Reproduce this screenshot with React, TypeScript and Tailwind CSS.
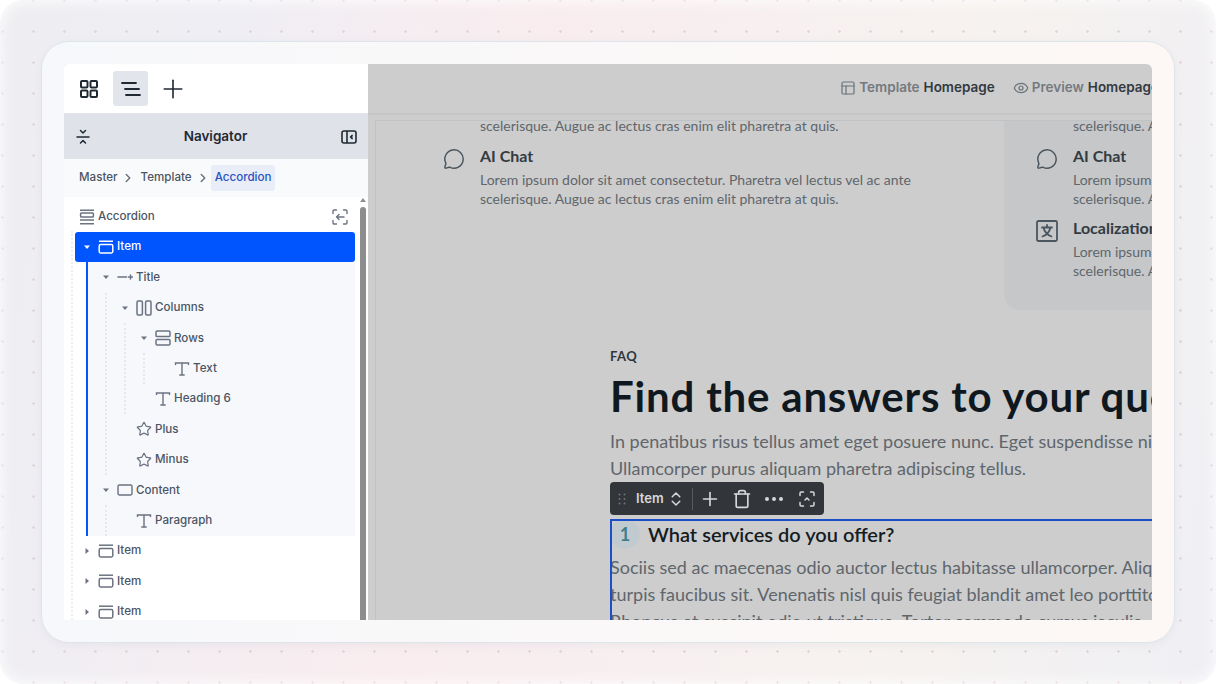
import { ChevronRight, ChevronsUpDown, Ellipsis, Eye, MessageCircle, PanelsTopLeft, Plus, Star, Trash } from 'lucide-react';
import type { ReactNode } from 'react';

type IconProps = { className?: string };

function GridIcon({ className }: IconProps) {
  return (
    <svg viewBox="0 0 18 18" className={className} fill="none" stroke="currentColor" strokeWidth="2">
      <rect x="1" y="1" width="6.5" height="6.5" rx="1" />
      <rect x="10.5" y="1" width="6.5" height="6.5" rx="1" />
      <rect x="1" y="10.5" width="6.5" height="6.5" rx="1" />
      <rect x="10.5" y="10.5" width="6.5" height="6.5" rx="1" />
    </svg>
  );
}

function MenuIcon({ className }: IconProps) {
  return (
    <svg viewBox="0 0 20 16" className={className} fill="none" stroke="currentColor" strokeWidth="1.8" strokeLinecap="round">
      <path d="M1 2h14M4 8h14M5 14h14" />
    </svg>
  );
}

function CollapseIcon({ className }: IconProps) {
  return (
    <svg viewBox="0 0 14 16" className={className} fill="none" stroke="currentColor" strokeWidth="1.5" strokeLinecap="round" strokeLinejoin="round">
      <path d="M1 8h12M4.5 1.5 7 4l2.5-2.5M4.5 14 7 11.5 9.5 14" />
    </svg>
  );
}

function SidebarIcon({ className }: IconProps) {
  return (
    <svg viewBox="0 0 16 14" className={className} fill="none" stroke="currentColor" strokeWidth="1.6" strokeLinejoin="round">
      <rect x="1" y="1" width="14" height="12" rx="2" />
      <path d="M6 1v12" />
      <path d="M11.5 4.8 9.4 7l2.1 2.2" fill="currentColor" strokeWidth="1.2" />
    </svg>
  );
}

function StackIcon({ className }: IconProps) {
  return (
    <svg viewBox="0 0 16 16" className={className} fill="none" stroke="currentColor" strokeWidth="1.5">
      <path d="M1 1.2h14M1 14.8h14" />
      <rect x="1.6" y="4" width="12.8" height="4" rx=".8" />
      <path d="M1 11h14" />
    </svg>
  );
}

function ItemIcon({ className }: IconProps) {
  return (
    <svg viewBox="0 0 16 14" className={className} fill="none" stroke="currentColor" strokeWidth="1.5">
      <path d="M1 1.2h14" />
      <rect x="1.2" y="4.6" width="13.6" height="8.4" rx="1.4" />
    </svg>
  );
}

function TitleIcon({ className }: IconProps) {
  return (
    <svg viewBox="0 0 16 8" className={className} fill="none" stroke="currentColor" strokeWidth="1.5" strokeLinecap="round">
      <path d="M1 4h8.5M13.5 2v4M11.5 4h4" />
    </svg>
  );
}

function ColumnsIcon({ className }: IconProps) {
  return (
    <svg viewBox="0 0 16 16" className={className} fill="none" stroke="currentColor" strokeWidth="1.5">
      <rect x="1" y="1" width="5.4" height="14" rx="1.2" />
      <rect x="9.6" y="1" width="5.4" height="14" rx="1.2" />
    </svg>
  );
}

function RowsIcon({ className }: IconProps) {
  return (
    <svg viewBox="0 0 16 16" className={className} fill="none" stroke="currentColor" strokeWidth="1.5">
      <rect x="1" y="1" width="14" height="5.6" rx="1.2" />
      <rect x="1" y="9.4" width="14" height="5.6" rx="1.2" />
    </svg>
  );
}

function TypeIcon({ className }: IconProps) {
  return (
    <svg viewBox="0 0 16 16" className={className} fill="none" stroke="currentColor" strokeWidth="1.4" strokeLinecap="round">
      <path d="M1.500 3.600V2h13v1.600M8 2v12M5.800 14h4.400" />
    </svg>
  );
}

function BoxIcon({ className }: IconProps) {
  return (
    <svg viewBox="0 0 16 12" className={className} fill="none" stroke="currentColor" strokeWidth="1.4">
      <rect x="1" y="1" width="14" height="10" rx="1.4" />
    </svg>
  );
}

function FocusBackIcon({ className }: IconProps) {
  return (
    <svg viewBox="0 0 16 16" className={className} fill="none" stroke="currentColor" strokeWidth="1.4" strokeLinecap="round" strokeLinejoin="round">
      <path d="M1 4.5V2.200C1 1.500 1.500 1 2.200 1h2.300M11.500 1h2.300c.7 0 1.200.5 1.200 1.200v2.300M15 11.500v2.300c0 .7-.5 1.200-1.200 1.200h-2.300M4.500 15H2.200C1.500 15 1 14.500 1 13.800v-2.300" />
      <path d="M12 8H4.500M7 5.500 4.500 8 7 10.500" />
    </svg>
  );
}

function FocusUpIcon({ className }: IconProps) {
  return (
    <svg viewBox="0 0 16 16" className={className} fill="none" stroke="currentColor" strokeWidth="1.500" strokeLinecap="round" strokeLinejoin="round">
      <path d="M1 4.500V2.200C1 1.500 1.500 1 2.200 1h2.300M11.500 1h2.300c.7 0 1.200.5 1.200 1.200v2.300M15 11.500v2.300c0 .7-.5 1.200-1.200 1.200h-2.300M4.500 15H2.200C1.500 15 1 14.500 1 13.800v-2.300" />
      <path d="M6 9 8 7l2 2" />
    </svg>
  );
}

function LocalizationIcon({ className }: IconProps) {
  return (
    <svg viewBox="0 0 22 22" className={className} fill="none" stroke="currentColor" strokeWidth="1.800" strokeLinecap="round" strokeLinejoin="round">
      <rect x="1" y="1" width="20" height="20" rx="1.500" />
      <path d="M6 7.500h10M11 5v2.500M14.500 7.500C13.500 12 10.500 15 6.500 16.500M7.500 7.500c1 4.500 4 7.500 8 9" />
    </svg>
  );
}

function Caret({ open }: { open: boolean }) {
  return (
    <svg viewBox="0 0 8 8" className="size-2 shrink-0 text-current" fill="currentColor">
      {open ? <path d="M1 2.500h6L4 6z" /> : <path d="M2.500 1v6L6 4z" />}
    </svg>
  );
}

interface TreeNode {
  label: string;
  icon: ReactNode;
  open?: boolean;
  leaf?: boolean;
  children?: TreeNode[];
}

const icon16 = 'w-4 h-4 shrink-0 text-[#6b7280]';

const itemChildren: TreeNode[] = [
  {
    label: 'Title',
    icon: <TitleIcon className={icon16} />,
    open: true,
    children: [
      {
        label: 'Columns',
        icon: <ColumnsIcon className={icon16} />,
        open: true,
        children: [
          {
            label: 'Rows',
            icon: <RowsIcon className={icon16} />,
            open: true,
            children: [{ label: 'Text', icon: <TypeIcon className={icon16} />, leaf: true }],
          },
          { label: 'Heading 6', icon: <TypeIcon className={icon16} />, leaf: true },
        ],
      },
      { label: 'Plus', icon: <Star className={icon16} strokeWidth={1.800} />, leaf: true },
      { label: 'Minus', icon: <Star className={icon16} strokeWidth={1.800} />, leaf: true },
    ],
  },
  {
    label: 'Content',
    icon: <BoxIcon className={icon16} />,
    open: true,
    children: [{ label: 'Paragraph', icon: <TypeIcon className={icon16} />, leaf: true }],
  },
];

function TreeRow({ node }: { node: TreeNode }) {
  return (
    <>
      <div className="flex h-[30.4px] items-center pl-[6px] text-[#4b5563]">
        <span className="flex w-3 justify-center text-[#6b7280]">{!node.leaf && <Caret open={!!node.open} />}</span>
        <span className="ml-[5px] mr-[3px]">{node.icon}</span>
        <span>{node.label}</span>
      </div>
      {node.children && (
        <div className="relative pl-[19px]">
          <div className="absolute bottom-0 left-[11px] top-0 border-l-2 border-dotted border-[#e6e8ec]" />
          {node.children.map((child) => (
            <TreeRow key={child.label} node={child} />
          ))}
        </div>
      )}
    </>
  );
}

function CollapsedItem() {
  return (
    <div className="flex h-[30.4px] items-center pl-[6px] text-[#4b5563]">
      <span className="flex w-3 justify-center text-[#6b7280]">
        <Caret open={false} />
      </span>
      <ItemIcon className={`ml-[5px] mr-[3px] ${icon16}`} />
      <span>Item</span>
    </div>
  );
}

function Navigator() {
  return (
    <aside className="flex w-[304px] shrink-0 flex-col overflow-hidden bg-white font-['Inter',sans-serif] text-[11.6px] font-medium">
      <div className="flex h-[50px] shrink-0 items-center border-b border-[#e2e4e8] pl-[7px]">
        <button className="flex size-[35px] items-center justify-center text-[#1f2933]">
          <GridIcon className="size-[18px]" />
        </button>
        <button className="ml-[7px] flex size-[35px] items-center justify-center rounded-[3px] bg-[#e2e6ec] text-[#1f2933]">
          <MenuIcon className="h-4 w-5" />
        </button>
        <button className="ml-[7px] flex size-[35px] items-center justify-center text-[#1f2933]">
          <Plus className="size-[30px]" strokeWidth={1.300} />
        </button>
      </div>
      <div className="flex h-[45px] shrink-0 items-center justify-between bg-[#dfe3e9] pl-3 pr-[11px] text-[#1f2933]">
        <CollapseIcon className="h-4 w-[14px]" />
        <span className="text-[13.5px] font-semibold">Navigator</span>
        <SidebarIcon className="h-[14px] w-4" />
      </div>
      <div className="flex h-[38px] shrink-0 items-center bg-[#f9fafb] pl-[15px] text-[#4b5563]">
        <span>Master</span>
        <ChevronRight className="ml-[3px] mr-[6px] size-[14px] text-[#6b7280]" strokeWidth={2.500} />
        <span>Template</span>
        <ChevronRight className="ml-[4px] mr-[1px] size-[14px] text-[#6b7280]" strokeWidth={2.500} />
        <span className="rounded-[3px] bg-[#e8edf7] px-1 py-[4px] text-[#2a52c0]">Accordion</span>
      </div>
      <div className="flex min-h-0 flex-1">
        <div className="relative w-[296px] shrink-0 overflow-hidden pl-[11px] pr-[5px] pt-[4.5px]">
          <div className="absolute bottom-0 left-[7px] top-[34px] border-l-2 border-dotted border-[#eceef1]" />
          <div className="flex h-[30.4px] items-center justify-between pl-1 pr-[7px] text-[#4b5563]">
            <span className="flex items-center gap-[3px]">
              <StackIcon className={icon16} />
              Accordion
            </span>
            <FocusBackIcon className="size-4 text-[#6b7280]" />
          </div>
          <div className="flex h-[30.4px] items-center rounded-[3px] bg-[#0055ff] pl-[6px] text-white">
            <span className="flex w-3 justify-center">
              <Caret open />
            </span>
            <ItemIcon className="ml-[5px] mr-[3px] h-4 w-4 shrink-0" />
            <span>Item</span>
          </div>
          <div className="ml-[11px] border-l-2 border-[#0055ff] bg-[#f6f8fc] pl-[6px]">
            {itemChildren.map((node) => (
              <TreeRow key={node.label} node={node} />
            ))}
          </div>
          <CollapsedItem />
          <CollapsedItem />
          <CollapsedItem />
        </div>
        <div className="flex w-2 shrink-0 flex-col items-center pr-[2px]">
          <svg viewBox="0 0 6 4" className="mt-[1px] h-1 w-[6px] shrink-0 text-[#8c9096]" fill="currentColor">
            <path d="M3 0l3 4H0z" />
          </svg>
          <div className="mt-[5px] w-[6px] flex-1 rounded-t-sm bg-[#8d8d8d]" />
        </div>
      </div>
    </aside>
  );
}

function Feature({ icon, title }: { icon: ReactNode; title: string }) {
  return (
    <div className="flex">
      <span className="mr-[15px] mt-[3px] flex size-[22px] shrink-0 items-center justify-center text-[#4b565f]">{icon}</span>
      <div>
        <div className="mb-[3px] h-[22px] text-[16px] font-bold leading-[22px] text-[#333b42]">{title}</div>
        <p className="whitespace-nowrap text-[14px] leading-[19px] text-[#5f666c]">
          Lorem ipsum dolor sit amet consectetur. Pharetra vel lectus vel ac ante
          <br />
          scelerisque. Augue ac lectus cras enim elit pharetra at quis.
        </p>
      </div>
    </div>
  );
}

function Toolbar() {
  return (
    <div className="absolute -top-[37px] left-0 flex h-[33px] w-[214px] items-center rounded-[4px] bg-[#32363a] pl-[8px] text-[#d5d8db]">
      <svg viewBox="0 0 8 12" className="h-3 w-2 text-[#6c7278]" fill="currentColor">
        <circle cx="1.500" cy="1.500" r="1" />
        <circle cx="6.500" cy="1.500" r="1" />
        <circle cx="1.500" cy="6" r="1" />
        <circle cx="6.500" cy="6" r="1" />
        <circle cx="1.500" cy="10.500" r="1" />
        <circle cx="6.500" cy="10.500" r="1" />
      </svg>
      <span className="ml-[10px] font-['Inter',sans-serif] text-[13px] font-semibold">Item</span>
      <ChevronsUpDown className="ml-[3px] size-[18px]" strokeWidth={2} />
      <div className="ml-[7px] h-[22px] w-px bg-[#565b60]" />
      <Plus className="ml-[6px] size-[22px]" strokeWidth={1.800} />
      <Trash className="ml-[11px] size-5" strokeWidth={2} />
      <Ellipsis className="ml-[10px] size-6" strokeWidth={2} />
      <FocusUpIcon className="ml-[13px] size-4" />
    </div>
  );
}

function Canvas() {
  return (
    <main className="flex min-w-0 flex-1 flex-col bg-[#cdcdcd]">
      <header className="flex h-[51px] shrink-0 items-center justify-end gap-[18px] border-b-2 border-[#c4c6c8] pb-[2px] font-['Inter',sans-serif] text-[13.5px] font-semibold">
        <span className="flex items-center whitespace-nowrap text-[#33393f]">
          <PanelsTopLeft className="mr-[3px] size-4 text-[#6b7278]" strokeWidth={1.800} />
          <span className="mr-1 text-[#74797f]">Template</span>
          Homepage
        </span>
        <span className="-mr-[7px] flex items-center whitespace-nowrap text-[#33393f]">
          <Eye className="mr-[3px] size-4 text-[#6b7278]" strokeWidth={1.800} />
          <span className="mr-1 text-[#74797f]">Preview</span>
          Homepage
        </span>
      </header>
      <div className="mt-[5px] ml-[7px] min-h-0 flex-1 overflow-hidden border-l border-t border-[#c0c3c6] font-['Lato',sans-serif]">
        <div className="-mt-[5px] flex">
          <div className="w-[628px] shrink-0 pl-[67px]">
            <p className="pl-[37px] text-[14px] leading-[19px] whitespace-nowrap text-[#5f666c]">
              scelerisque. Augue ac lectus cras enim elit pharetra at quis.
            </p>
            <div className="mt-[10px]">
              <Feature icon={<MessageCircle className="size-[24px]" strokeWidth={1.600} />} title="AI Chat" />
            </div>
          </div>
          <div className="h-[194px] w-[400px] shrink-0 rounded-bl-2xl bg-[#c5c7c9] pl-8">
            <p className="pl-[37px] text-[14px] leading-[19px] whitespace-nowrap text-[#5f666c]">
              scelerisque. Augue ac lectus cras enim elit pharetra at quis.
            </p>
            <div className="mt-[10px]">
              <Feature icon={<MessageCircle className="size-[24px]" strokeWidth={1.600} />} title="AI Chat" />
            </div>
            <div className="mt-[9px]">
              <Feature icon={<LocalizationIcon className="size-[22px]" />} title="Localization" />
            </div>
          </div>
        </div>
        <section className="ml-[234px] w-[900px] pt-[37px]">
          <div className="text-[13px] font-bold leading-[18px] tracking-[0.5px] text-[#2f363c]">FAQ</div>
          <h2 className="mt-[8px] whitespace-nowrap text-[42px] font-bold leading-[46px] tracking-[0.8px] text-[#10181f]">
            Find the answers to your questions
          </h2>
          <p className="mt-[9px] whitespace-nowrap text-[18px] leading-[27px] text-[#5f666c]">
            In penatibus risus tellus amet eget posuere nunc. Eget suspendisse nisl
            <br />
            Ullamcorper purus aliquam pharetra adipiscing tellus.
          </p>
          <div className="relative mt-[37px] h-[140px] outline-2 -outline-offset-2 outline-[#1a4fc9]">
            <Toolbar />
            <div className="flex h-[30px] items-center">
              <span className="flex size-[30px] items-center justify-center rounded-full bg-[#c1cbcf] text-[18px] font-bold text-[#3f7d8c]">1</span>
              <span className="ml-2 text-[20px] font-semibold text-[#141c23]">What services do you offer?</span>
            </div>
            <p className="mt-[5px] whitespace-nowrap text-[18px] leading-[27px] text-[#5f666c]">
              Sociis sed ac maecenas odio auctor lectus habitasse ullamcorper. Aliquam
              <br />
              turpis faucibus sit. Venenatis nisl quis feugiat blandit amet leo porttitor
              <br />
              Rhoncus et suscipit odio ut tristique. Tortor commodo cursus iaculis
            </p>
          </div>
        </section>
      </div>
    </main>
  );
}

export default function App() {
  return (
    <div className="h-[684px] w-[1216px] overflow-hidden bg-white">
      <div className="h-full w-full rounded-[24px] bg-[radial-gradient(circle_at_center,#e3d3dc_1px,transparent_1.5px),radial-gradient(ellipse_at_46%_0%,#f9ecee_0%,transparent_35%),radial-gradient(ellipse_at_33%_100%,#f9ecee_0%,transparent_35%),linear-gradient(100deg,#eeeef2_0%,#f0eef5_30%,#f6f1f2_55%,#f6f2ef_75%,#efeff4_100%)] bg-[length:31px_31px,100%_100%,100%_100%,100%_100%] bg-[position:-13px_-15px,0_0,0_0,0_0] p-[41px] shadow-[inset_0_0_16px_#ffffff]">
        <div className="h-[602px] w-[1134px] rounded-[28px] border border-[#dce5ea] bg-gradient-to-r from-[#f7f8fb] to-[#fdf8f5] p-[22px] shadow-[0_2px_8px_rgba(120,130,150,0.08)]">
          <div className="flex h-[556px] overflow-hidden rounded-t-md">
            <Navigator />
            <Canvas />
          </div>
        </div>
      </div>
    </div>
  );
}
